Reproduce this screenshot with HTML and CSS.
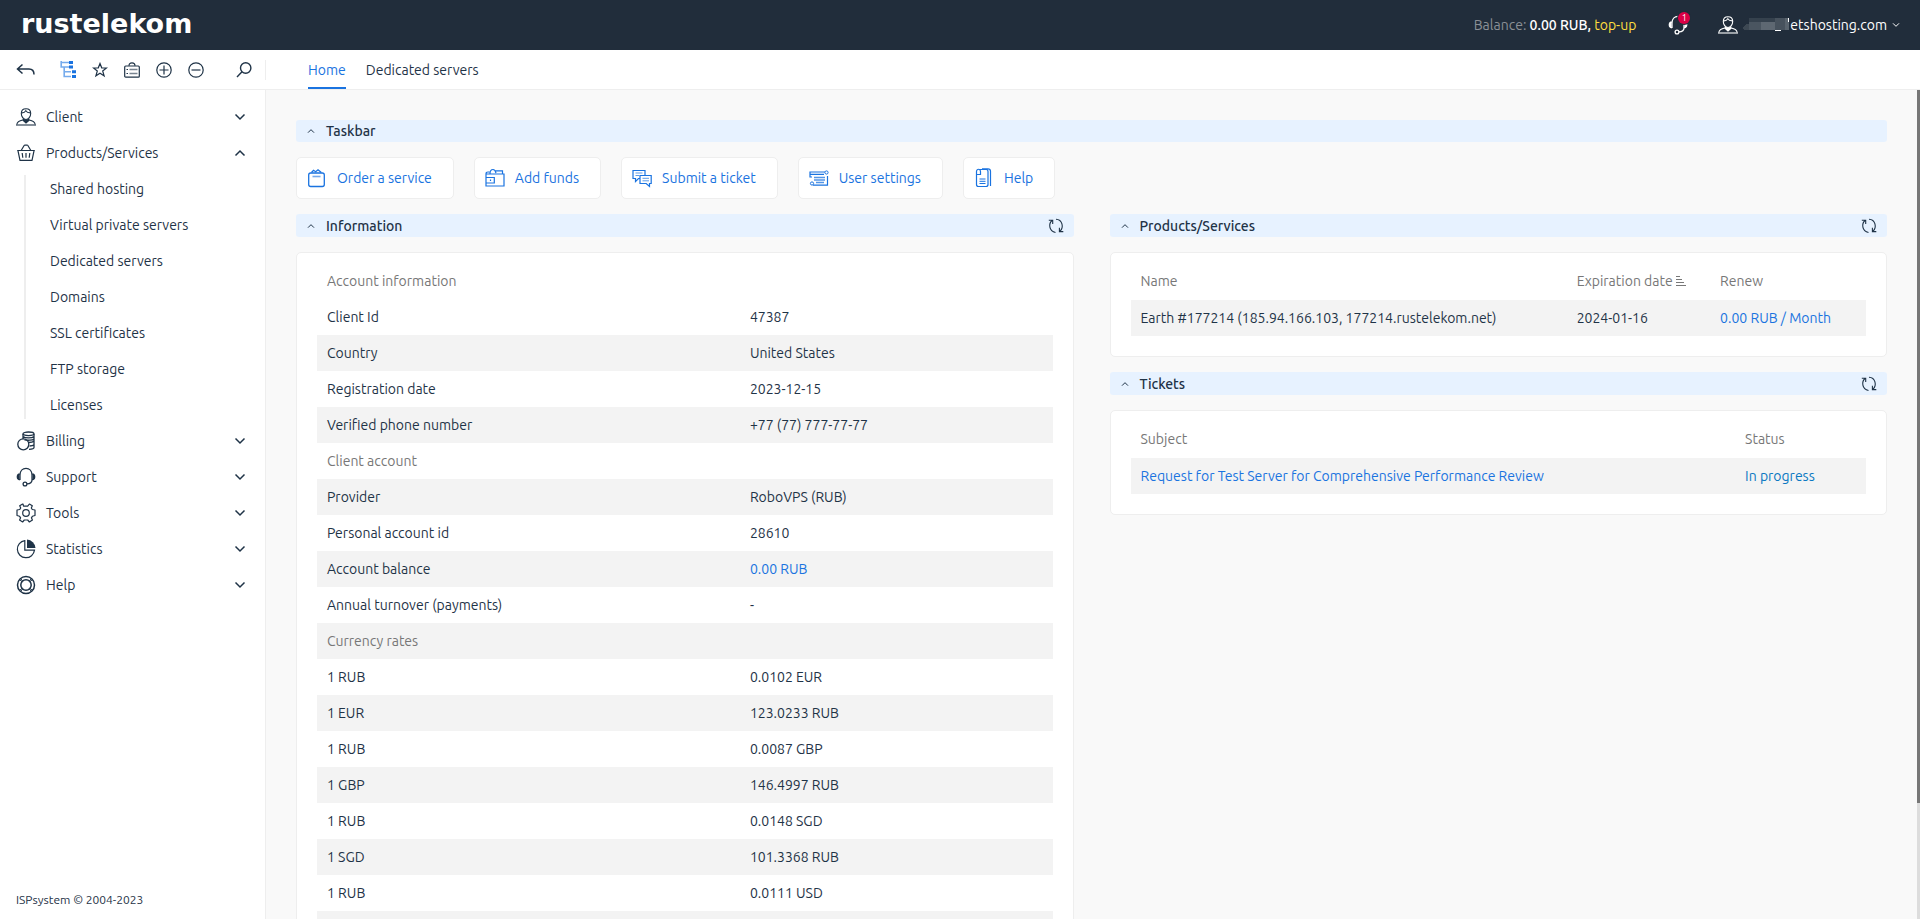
FILE: index.html
```html
<!DOCTYPE html>
<html lang="en">
<head>
<meta charset="utf-8">
<title>Home</title>
<link rel="stylesheet" href="styles.css">
</head>
<body>
<svg class="sprite" aria-hidden="true">
  <symbol id="user" viewBox="0 0 20 18"><g fill="none" stroke="currentColor" stroke-width="1.1"><path d="M5.300 5.500C5.300 2.600 7 .7 10 .7s4.700 1.900 4.700 4.800c0 3-2.200 6-4.700 6s-4.700-3-4.700-6z"/><path d="M5.500 4.800c2 .2 3.500-.8 4.300-2.100.8 1.400 2.600 2.300 4.900 2.200"/><path d="M.8 16.500c.3-2.600 2-3.700 6-4.500M19.200 16.500c-.3-2.600-2-3.700-6-4.500"/></g><path d="M6.800 10.500l3.200 1.300 3.300-1.300.4 2L10 15.700l-3.600-3.200z" fill="currentColor"/><path d="M0 16h20v2H0z" fill="currentColor" opacity=".55"/></symbol>
  <symbol id="basket" viewBox="0 0 20 18"><g fill="none" stroke="currentColor" stroke-width="1.2"><path d="M1.200 6.500h17.600M2 6.800l2 9.500h12l2-9.500M5.300 6.300l3-5M14.700 6.300l-3-5M8.300 1.200h3.400M6.200 9l.6 4.800M10 9v4.800M13.800 9l-.6 4.800"/></g></symbol>
  <symbol id="coins" viewBox="0 0 20 20"><g fill="none" stroke="currentColor" stroke-width="1.300"><ellipse cx="12.500" cy="2.800" rx="5.500" ry="1.800"/><path d="M7 3v5M18 3v13.500c0 1-2 1.800-5 1.800M7 5.500c2 1.800 9 1.800 11 0M8.500 8.800c3 .8 8 .6 9.500-.8M12.500 11.500c2.500 0 4.500-.4 5.500-1.200M13.500 15c2 0 3.800-.4 4.500-1.200"/><circle cx="7.300" cy="13.300" r="5.500"/></g></symbol>
  <symbol id="headset" viewBox="0 0 20 20"><g fill="none" stroke="currentColor" stroke-width="1.300"><path d="M4 13V8c0-4 2.600-6.700 6-6.700S16 4 16 8v5M3.800 6.800C2 7 1.300 8 1.300 9.800s.8 2.800 2.500 3M16.200 6.800c1.800.2 2.500 1.200 2.500 3s-.8 2.800-2.500 3M16 13c0 2.500-1.500 3.700-5 3.900"/><circle cx="9" cy="17" r="1.900"/></g><path d="M1.500 8h2v4h-2zM16.500 8h2v4h-2z" fill="currentColor"/></symbol>
  <symbol id="gear" viewBox="0 0 20 20"><g fill="none" stroke="currentColor" stroke-width="1.200" stroke-linejoin="round"><path d="M7.500 3.200L7 1h-.4L3.700 2.800l1 2.200-1 1.500L1 7v5.500l2.600.8 1 1.500-1 2.300 3 1.900L8.300 17h3.400l1.700 2 3-1.900-1-2.300 1-1.500 2.600-.8V7l-2.700-.5-1-1.500 1-2.200L13.400 1l-1.700 2.200z"/><circle cx="10" cy="10" r="3.300"/></g></symbol>
  <symbol id="pie" viewBox="0 0 20 20"><path d="M8.800 1.600a8.600 8.600 0 1 0 9.700 9.600H8.800z" fill="none" stroke="currentColor" stroke-width="1.200"/><path d="M11 .6a9 9 0 0 1 8.500 8.400H11z" fill="currentColor"/></symbol>
  <symbol id="ring" viewBox="0 0 20 20"><g fill="none" stroke="currentColor" stroke-width="1.500"><circle cx="10" cy="10" r="8.500"/><circle cx="10" cy="10" r="5.200"/></g><path d="M3.800 4.800l2.400 2M4.800 3.800l2 2.400M16.200 4.800l-2.400 2M15.200 3.800l-2 2.400M3.800 15.200l2.400-2M4.800 16.200l2-2.400M16.200 15.200l-2.400-2M15.200 16.200l-2-2.400" stroke="currentColor"/></symbol>
  <symbol id="down" viewBox="0 0 12 12"><path d="M1.500 3.500L6 8l4.500-4.500" fill="none" stroke="currentColor" stroke-width="1.500"/></symbol>
  <symbol id="up" viewBox="0 0 12 12"><path d="M1.500 8.500L6 4l4.500 4.500" fill="none" stroke="currentColor" stroke-width="1.500"/></symbol>
  <symbol id="reload" viewBox="0 0 16 16"><g fill="none" stroke="currentColor" stroke-width="1.100"><path d="M4 2.500C.5 5.500.7 13 7.500 14.500M8 1.200c6.500.3 8 8 4 12M.8 2.200h3.900v3.900M15.300 13.600h-3.900V9.700"/></g></symbol>
  <symbol id="back" viewBox="0 0 20 14"><path d="M6.500 1.500L1.500 6l5 4.500M1.500 6H13c3.500 0 5 1.500 5 5.500" fill="none" stroke="currentColor" stroke-width="1.500"/></symbol>
  <symbol id="tree" viewBox="0 0 16 17"><path d="M1.200 0v6h3v9.500H11M1.200 1.500H9M1.200 6H9M4.200 10.800H11" fill="none" stroke="currentColor" stroke-width="1.600" opacity=".6"/><path d="M9 0h4v3H9zM9 4.500h4v3H9zM12 9.200h4v3h-4zM12 14h4v3h-4z" fill="currentColor"/></symbol>
  <symbol id="star" viewBox="0 0 16 16"><path d="M8 1.500l1.700 4.300 4.800.2-3.800 3 1.400 4.800L8 11.200l-4.100 2.600L5.300 9 1.500 6l4.800-.2z" fill="none" stroke="currentColor" stroke-width="1.200"/></symbol>
  <symbol id="card" viewBox="0 0 16 16"><rect x=".7" y="4" width="14.600" height="11.200" rx="1" fill="none" stroke="currentColor" stroke-width="1.200"/><path d="M5 3.800C5 2 6 .9 8 .9s3 1.100 3 2.900M2.500 7.500h1.500M2.500 11.500h1.500" fill="none" stroke="currentColor" stroke-width="1.200"/><path d="M5.500 7.500H13.500M5.500 11.500H13.500" stroke="currentColor" stroke-width="1.500" opacity=".6"/></symbol>
  <symbol id="plus" viewBox="0 0 16 16"><g fill="none" stroke="currentColor" stroke-width="1.200"><circle cx="8" cy="8" r="7.200"/><path d="M3.500 8h9M8 3.500v9"/></g></symbol>
  <symbol id="minus" viewBox="0 0 16 16"><g fill="none" stroke="currentColor" stroke-width="1.200"><circle cx="8" cy="8" r="7.200"/><path d="M3.500 8h9"/></g></symbol>
  <symbol id="search" viewBox="0 0 16 16"><g fill="none" stroke="currentColor" stroke-width="1.400"><circle cx="9.700" cy="6" r="5.200"/><path d="M6 9.700L1 15"/></g></symbol>
  <symbol id="bag" viewBox="0 0 20 20"><g fill="none" stroke="currentColor" stroke-width="1.300"><rect x="1.700" y="5" width="15.600" height="13.500" rx="2"/><path d="M4.500 4.500l2-2.200 2.200 1.400L11 1.800l1.800 1.500 1.500 1.200"/></g><path d="M5.500 8.500h8" stroke="currentColor" stroke-width="1.600" opacity=".6"/></symbol>
  <symbol id="wallet" viewBox="0 0 20 20"><g fill="none" stroke="currentColor" stroke-width="1.200"><path d="M1 6h18v12H1zM1 6c0-1.300.6-2 2-2h1.500M5 5.800C5 3 6 1.500 8 1.500S10.500 3 11 5M10 2.800h7.500V6M1 9.500h8.300v5.500H1"/><path d="M5.500 11.500v1.500"/></g></symbol>
  <symbol id="chat" viewBox="0 0 20 20"><g fill="#fff" stroke="currentColor" stroke-width="1.200"><path d="M1 2.500h12v8H6.500L3.500 13.500v-3H1z"/><path d="M8 7.500h11.200v8H17.500v3l-3.300-3H8z"/></g><path d="M3.500 5h7M3.500 7.500h3.500M10.500 10.300h6.500M10.500 12.800h6.500" stroke="currentColor" opacity=".7"/></symbol>
  <symbol id="profile" viewBox="0 0 20 20"><path d="M16 4H1v5h2M4 17.200h14.500V8M1 6.300h14" fill="none" stroke="currentColor" stroke-width="1.200"/><path d="M5 9.500h11M5 12h11M7 14.500h8" stroke="currentColor" stroke-width="1.500" opacity=".75"/><circle cx="17.500" cy="4.500" r="1.600" fill="#fff" stroke="currentColor"/><circle cx="3" cy="15.500" r="1.600" fill="#fff" stroke="currentColor"/></symbol>
  <symbol id="doc" viewBox="0 0 20 20"><g fill="none" stroke="currentColor" stroke-width="1.200"><path d="M5.500 1.500H12c1.200 0 2 .8 2 2v13c0 1.200-.8 2-2 2H4.500c-1.200 0-2-.8-2-2V6M2.500 6.500V3.500c0-3 4-3 4 0v3h-4M8 .8h6c1.500 0 2.500 1 2.500 2.500V18"/><path d="M5.500 11h6M5.500 13.300h6M5.500 15.500h6" stroke-width="1"/></g></symbol>
  <symbol id="sort" viewBox="0 0 10 10"><path d="M0 .5h4M0 3.500h6M0 6.500h8M0 9.500h10" stroke="currentColor"/></symbol>
</svg>

<header class="topbar">
  <a class="logo" href="#">rustelekom</a>
  <div class="balance">Balance: <b>0.00 RUB,</b> <a href="#">top-up</a></div>
  <button class="alerts" aria-label="Notifications"><svg width="20" height="20"><use href="#headset"/></svg><span class="badge">1</span></button>
  <button class="account">
    <svg width="20" height="18"><use href="#user"/></svg>
    <svg class="mosaic" width="50" height="14" viewBox="0 0 50 14" shape-rendering="crispEdges"><path d="M2 10l4-4h5v6H4z" fill="#3d4853"/><path d="M9 0h12v12H9z" fill="#4a5560"/><path d="M9 0h12v4H9z" fill="#35414d"/><path d="M21 4h14v8H21z" fill="#5e6872"/><path d="M21 0h14v4H21z" fill="#35414d"/><path d="M35 0h10v12H35z" fill="#47525d"/><path d="M45 0h4v12h-4z" fill="#59646e"/><path d="M35 12h6v1h-6zM48 0h1v4h-1z" fill="#fff"/></svg>
    <span>etshosting.com</span>
    <svg class="caret" width="8" height="8"><use href="#down"/></svg>
  </button>
</header>

<div class="toolbar">
  <div class="tools">
    <button class="tool back" aria-label="Back"><svg width="20" height="14"><use href="#back"/></svg></button>
    <button class="tool active" aria-label="Menu tree"><svg width="16" height="17"><use href="#tree"/></svg></button>
    <button class="tool" aria-label="Favorites"><svg width="16" height="16"><use href="#star"/></svg></button>
    <button class="tool" aria-label="Card"><svg width="16" height="16"><use href="#card"/></svg></button>
    <button class="tool" aria-label="Expand all"><svg width="16" height="16"><use href="#plus"/></svg></button>
    <button class="tool" aria-label="Collapse all"><svg width="16" height="16"><use href="#minus"/></svg></button>
    <button class="tool find" aria-label="Search"><svg width="16" height="16"><use href="#search"/></svg></button>
  </div>
  <nav class="tabs"><a class="tab current" href="#">Home</a><a class="tab" href="#">Dedicated servers</a></nav>
</div>

<div class="body">
  <aside class="sidebar">
    <nav class="menu">
      <button class="item"><svg width="20" height="18"><use href="#user"/></svg><span>Client</span><svg width="12" height="12"><use href="#down"/></svg></button>
      <button class="item"><svg width="20" height="18"><use href="#basket"/></svg><span>Products/Services</span><svg width="12" height="12"><use href="#up"/></svg></button>
      <div class="submenu">
        <a href="#">Shared hosting</a><a href="#">Virtual private servers</a><a href="#">Dedicated servers</a><a href="#">Domains</a><a href="#">SSL certificates</a><a href="#">FTP storage</a><a href="#">Licenses</a>
      </div>
      <button class="item"><svg width="20" height="20"><use href="#coins"/></svg><span>Billing</span><svg width="12" height="12"><use href="#down"/></svg></button>
      <button class="item"><svg width="20" height="20"><use href="#headset"/></svg><span>Support</span><svg width="12" height="12"><use href="#down"/></svg></button>
      <button class="item"><svg width="20" height="20"><use href="#gear"/></svg><span>Tools</span><svg width="12" height="12"><use href="#down"/></svg></button>
      <button class="item"><svg width="20" height="20"><use href="#pie"/></svg><span>Statistics</span><svg width="12" height="12"><use href="#down"/></svg></button>
      <button class="item"><svg width="20" height="20"><use href="#ring"/></svg><span>Help</span><svg width="12" height="12"><use href="#down"/></svg></button>
    </nav>
    <footer class="copyright">ISPsystem © 2004-2023</footer>
  </aside>

  <main class="content">
    <h2 class="bar task"><svg width="8" height="8"><use href="#up"/></svg><span>Taskbar</span></h2>
    <div class="actions">
      <button class="action"><svg width="20" height="20"><use href="#bag"/></svg>Order a service</button>
      <button class="action"><svg width="20" height="20"><use href="#wallet"/></svg>Add funds</button>
      <button class="action"><svg width="20" height="20"><use href="#chat"/></svg>Submit a ticket</button>
      <button class="action"><svg width="20" height="20"><use href="#profile"/></svg>User settings</button>
      <button class="action"><svg width="20" height="20"><use href="#doc"/></svg>Help</button>
    </div>
    <div class="columns">
      <section class="column">
        <h2 class="bar"><svg width="8" height="8"><use href="#up"/></svg><span>Information</span><button class="reload" aria-label="Refresh"><svg width="16" height="16"><use href="#reload"/></svg></button></h2>
        <div class="card">
          <table class="info">
            <tr class="group"><td>Account information</td><td></td></tr>
            <tr><td>Client Id</td><td>47387</td></tr>
            <tr><td>Country</td><td>United States</td></tr>
            <tr><td>Registration date</td><td>2023-12-15</td></tr>
            <tr><td>Verified phone number</td><td>+77 (77) 777-77-77</td></tr>
            <tr class="group"><td>Client account</td><td></td></tr>
            <tr><td>Provider</td><td>RoboVPS (RUB)</td></tr>
            <tr><td>Personal account id</td><td>28610</td></tr>
            <tr><td>Account balance</td><td><a href="#">0.00 RUB</a></td></tr>
            <tr><td>Annual turnover (payments)</td><td>-</td></tr>
            <tr class="group"><td>Currency rates</td><td></td></tr>
            <tr><td>1 RUB</td><td>0.0102 EUR</td></tr>
            <tr><td>1 EUR</td><td>123.0233 RUB</td></tr>
            <tr><td>1 RUB</td><td>0.0087 GBP</td></tr>
            <tr><td>1 GBP</td><td>146.4997 RUB</td></tr>
            <tr><td>1 RUB</td><td>0.0148 SGD</td></tr>
            <tr><td>1 SGD</td><td>101.3368 RUB</td></tr>
            <tr><td>1 RUB</td><td>0.0111 USD</td></tr>
            <tr><td></td><td></td></tr>
          </table>
        </div>
      </section>
      <section class="column">
        <h2 class="bar"><svg width="8" height="8"><use href="#up"/></svg><span>Products/Services</span><button class="reload" aria-label="Refresh"><svg width="16" height="16"><use href="#reload"/></svg></button></h2>
        <div class="card list">
          <table class="products">
            <thead><tr><th>Name</th><th>Expiration date<svg class="sort" width="10" height="10"><use href="#sort"/></svg></th><th>Renew</th></tr></thead>
            <tbody><tr><td>Earth #177214 (185.94.166.103, 177214.rustelekom.net)</td><td>2024-01-16</td><td><a href="#">0.00 RUB / Month</a></td></tr></tbody>
          </table>
        </div>
        <h2 class="bar"><svg width="8" height="8"><use href="#up"/></svg><span>Tickets</span><button class="reload" aria-label="Refresh"><svg width="16" height="16"><use href="#reload"/></svg></button></h2>
        <div class="card list">
          <table class="tickets">
            <thead><tr><th>Subject</th><th>Status</th></tr></thead>
            <tbody><tr><td><a href="#">Request for Test Server for Comprehensive Performance Review</a></td><td class="progress">In progress</td></tr></tbody>
          </table>
        </div>
      </section>
    </div>
  </main>
  <div class="scroll"><div class="thumb"></div></div>
</div>
</body>
</html>
```
FILE: styles.css
```css
* { box-sizing: border-box; }
body {
  margin: 0;
  height: 100vh;
  display: flex;
  flex-direction: column;
  overflow: hidden;
  font: 14px/20px Ubuntu, "Noto Sans", sans-serif;
  color: #1f3347;
  background: #fff;
}
button { font: inherit; color: inherit; background: none; border: 0; padding: 0; cursor: pointer; }
a { color: #1a73e0; text-decoration: none; }
svg { flex: none; display: block; }
.sprite { position: absolute; width: 0; height: 0; }

.topbar { flex: none; height: 50px; padding: 0 20px 0 21px; display: flex; align-items: center; background: #212d3b; color: #fff; }
.logo { margin-right: auto; padding-bottom: 2px; color: #fff; font: bold 27px/44px "DejaVu Sans", sans-serif; }
.balance { color: #8b9096; }
.balance b { color: #fff; font-weight: 500; }
.balance a { color: #ffdf3f; }
.alerts { position: relative; margin-left: 32px; }
.badge { position: absolute; left: 10px; top: -3px; width: 12px; height: 12px; border-radius: 6px; background: #db0045; box-shadow: 0 0 0 1px #212d3b; font-size: 9px; line-height: 12px; text-align: center; }
.account { display: flex; align-items: center; margin-left: 30px; }
.mosaic { margin-left: 2px; }
.caret { margin-left: 5px; }

.toolbar { flex: none; height: 40px; display: flex; border-bottom: 1px solid #eee; }
.tools { width: 266px; padding: 0 14px 0 16px; display: flex; align-items: center; gap: 16px; background: linear-gradient(#eee, #eee) right center / 1px 20px no-repeat; }
.back { margin-right: 8px; }
.active { color: #1a73e0; }
.find { margin-left: auto; }
.tabs { padding-left: 42px; display: flex; gap: 20px; }
.tab { line-height: 40px; border-bottom: 2px solid transparent; height: 39px; color: inherit; }
.tab.current { color: #1a73e0; border-color: #1a73e0; }

.body { position: relative; flex: 1; min-height: 0; display: flex; }
.sidebar { flex: none; width: 266px; padding: 9px 0; display: flex; flex-direction: column; border-right: 1px solid #eee; }
.menu { flex: 1; display: flex; flex-direction: column; }
.item { height: 36px; padding: 0 19px 0 16px; display: flex; align-items: center; gap: 10px; text-align: left; }
.item span { flex: 1; }
.submenu { margin-left: 24px; padding-left: 24px; display: flex; flex-direction: column; background: linear-gradient(#eee, #eee) left center / 2px calc(100% - 8px) no-repeat; }
.submenu a { line-height: 36px; color: inherit; padding-left: 2px; }
.copyright { padding-left: 16px; font-size: 12px; }

.content { flex: 1; min-width: 0; padding: 30px 33px 30px 30px; background: #f9f9f9; overflow: hidden; }
.bar { margin: 0; height: 23px; padding: 0 10px 0 11px; display: flex; align-items: center; gap: 11px; border-radius: 3px; background: #e7f2ff; font-size: 14px; font-weight: 500; }
.bar.task { height: 22px; }
.bar span { flex: 1; }
.actions { margin: 15px 0; display: flex; gap: 20px; }
.action { height: 42px; padding: 0 21px 0 10px; display: flex; align-items: center; gap: 10px; border: 1px solid #eee; border-radius: 5px; background: #fff; color: #1a73e0; }
.columns { display: grid; grid-template-columns: 1fr 1fr; gap: 36px; align-items: start; }
.card { margin: 15px 0; padding: 10px 20px 20px; border: 1px solid #eee; border-radius: 5px; background: #fff; }
table { width: 100%; border-collapse: collapse; table-layout: fixed; }
td, th { height: 36px; padding: 0 10px; font-weight: normal; text-align: left; white-space: nowrap; }
th { height: 37px; padding-bottom: 2px; color: #777; }
.group { color: #777; }
.info tr:nth-child(odd):not(:first-child) { background: #f3f3f3; }
.list tbody tr { background: #f3f3f3; }
.info td:first-child { width: 57.5%; }
.products th:nth-child(2) { width: 19.5%; }
.products th:nth-child(3) { width: 21.2%; }
.tickets th:nth-child(2) { width: 17.8%; }
.sort { display: inline-block; margin-left: 3px; }
.progress { color: #0a78c2; }
.scroll { position: absolute; top: 0; right: 0; width: 3px; height: 100%; background: #ddd; }
.thumb { height: 86%; background: #777; }
```
